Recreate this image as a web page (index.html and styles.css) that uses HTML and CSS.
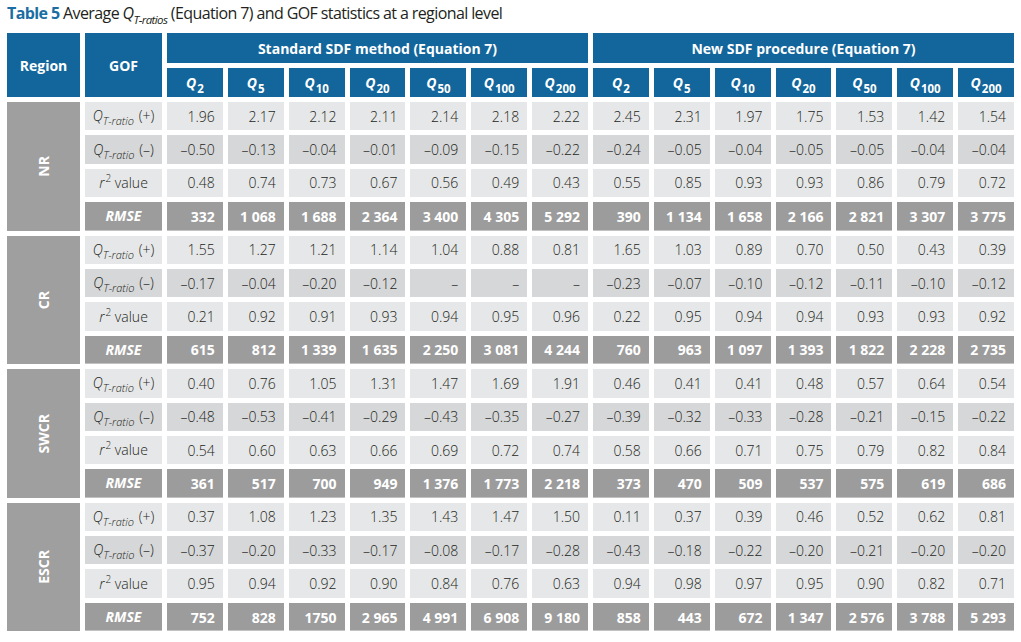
FILE: index.html
```html
<!DOCTYPE html>
<html lang="en">
<head>
<meta charset="utf-8">
<title>Table 5</title>
<link rel="stylesheet" href="styles.css">
</head>
<body>
<div class="title"><b class="tnum">Table 5</b> Average <i>Q</i><sub class="tsub">T-ratios</sub> (Equation 7) and GOF statistics at a regional level</div>
<div class="grid">
  <div class="h span2">Region</div>
  <div class="h span2">GOF</div>
  <div class="h grp">Standard SDF method (Equation 7)</div>
  <div class="h grp">New SDF procedure (Equation 7)</div>
  <div class="h q"><span><i>Q</i><sub>2</sub></span></div>
  <div class="h q"><span><i>Q</i><sub>5</sub></span></div>
  <div class="h q"><span><i>Q</i><sub>10</sub></span></div>
  <div class="h q"><span><i>Q</i><sub>20</sub></span></div>
  <div class="h q"><span><i>Q</i><sub>50</sub></span></div>
  <div class="h q"><span><i>Q</i><sub>100</sub></span></div>
  <div class="h q"><span><i>Q</i><sub>200</sub></span></div>
  <div class="h q"><span><i>Q</i><sub>2</sub></span></div>
  <div class="h q"><span><i>Q</i><sub>5</sub></span></div>
  <div class="h q"><span><i>Q</i><sub>10</sub></span></div>
  <div class="h q"><span><i>Q</i><sub>20</sub></span></div>
  <div class="h q"><span><i>Q</i><sub>50</sub></span></div>
  <div class="h q"><span><i>Q</i><sub>100</sub></span></div>
  <div class="h q"><span><i>Q</i><sub>200</sub></span></div>

  <!-- NR -->
  <div class="reg"><span>NR</span></div>
  <div class="row lt">
    <div class="lbl"><span><i>Q</i><sub>T-ratio</sub> (+)</span></div>
    <div>1.96</div><div>2.17</div><div>2.12</div><div>2.11</div><div>2.14</div><div>2.18</div><div>2.22</div>
    <div>2.45</div><div>2.31</div><div>1.97</div><div>1.75</div><div>1.53</div><div>1.42</div><div>1.54</div>
  </div>
  <div class="row dk">
    <div class="lbl"><span><i>Q</i><sub>T-ratio</sub> (–)</span></div>
    <div>–0.50</div><div>–0.13</div><div>–0.04</div><div>–0.01</div><div>–0.09</div><div>–0.15</div><div>–0.22</div>
    <div>–0.24</div><div>–0.05</div><div>–0.04</div><div>–0.05</div><div>–0.05</div><div>–0.04</div><div>–0.04</div>
  </div>
  <div class="row lt">
    <div class="lbl"><span><i>r</i><sup>2</sup> value</span></div>
    <div>0.48</div><div>0.74</div><div>0.73</div><div>0.67</div><div>0.56</div><div>0.49</div><div>0.43</div>
    <div>0.55</div><div>0.85</div><div>0.93</div><div>0.93</div><div>0.86</div><div>0.79</div><div>0.72</div>
  </div>
  <div class="row rm">
    <div class="lbl"><span><i>RMSE</i></span></div>
    <div>332</div><div>1 068</div><div>1 688</div><div>2 364</div><div>3 400</div><div>4 305</div><div>5 292</div>
    <div>390</div><div>1 134</div><div>1 658</div><div>2 166</div><div>2 821</div><div>3 307</div><div>3 775</div>
  </div>

  <!-- CR -->
  <div class="reg"><span>CR</span></div>
  <div class="row lt">
    <div class="lbl"><span><i>Q</i><sub>T-ratio</sub> (+)</span></div>
    <div>1.55</div><div>1.27</div><div>1.21</div><div>1.14</div><div>1.04</div><div>0.88</div><div>0.81</div>
    <div>1.65</div><div>1.03</div><div>0.89</div><div>0.70</div><div>0.50</div><div>0.43</div><div>0.39</div>
  </div>
  <div class="row dk">
    <div class="lbl"><span><i>Q</i><sub>T-ratio</sub> (–)</span></div>
    <div>–0.17</div><div>–0.04</div><div>–0.20</div><div>–0.12</div><div>–</div><div>–</div><div>–</div>
    <div>–0.23</div><div>–0.07</div><div>–0.10</div><div>–0.12</div><div>–0.11</div><div>–0.10</div><div>–0.12</div>
  </div>
  <div class="row lt">
    <div class="lbl"><span><i>r</i><sup>2</sup> value</span></div>
    <div>0.21</div><div>0.92</div><div>0.91</div><div>0.93</div><div>0.94</div><div>0.95</div><div>0.96</div>
    <div>0.22</div><div>0.95</div><div>0.94</div><div>0.94</div><div>0.93</div><div>0.93</div><div>0.92</div>
  </div>
  <div class="row rm">
    <div class="lbl"><span><i>RMSE</i></span></div>
    <div>615</div><div>812</div><div>1 339</div><div>1 635</div><div>2 250</div><div>3 081</div><div>4 244</div>
    <div>760</div><div>963</div><div>1 097</div><div>1 393</div><div>1 822</div><div>2 228</div><div>2 735</div>
  </div>

  <!-- SWCR -->
  <div class="reg"><span>SWCR</span></div>
  <div class="row lt">
    <div class="lbl"><span><i>Q</i><sub>T-ratio</sub> (+)</span></div>
    <div>0.40</div><div>0.76</div><div>1.05</div><div>1.31</div><div>1.47</div><div>1.69</div><div>1.91</div>
    <div>0.46</div><div>0.41</div><div>0.41</div><div>0.48</div><div>0.57</div><div>0.64</div><div>0.54</div>
  </div>
  <div class="row dk">
    <div class="lbl"><span><i>Q</i><sub>T-ratio</sub> (–)</span></div>
    <div>–0.48</div><div>–0.53</div><div>–0.41</div><div>–0.29</div><div>–0.43</div><div>–0.35</div><div>–0.27</div>
    <div>–0.39</div><div>–0.32</div><div>–0.33</div><div>–0.28</div><div>–0.21</div><div>–0.15</div><div>–0.22</div>
  </div>
  <div class="row lt">
    <div class="lbl"><span><i>r</i><sup>2</sup> value</span></div>
    <div>0.54</div><div>0.60</div><div>0.63</div><div>0.66</div><div>0.69</div><div>0.72</div><div>0.74</div>
    <div>0.58</div><div>0.66</div><div>0.71</div><div>0.75</div><div>0.79</div><div>0.82</div><div>0.84</div>
  </div>
  <div class="row rm">
    <div class="lbl"><span><i>RMSE</i></span></div>
    <div>361</div><div>517</div><div>700</div><div>949</div><div>1 376</div><div>1 773</div><div>2 218</div>
    <div>373</div><div>470</div><div>509</div><div>537</div><div>575</div><div>619</div><div>686</div>
  </div>

  <!-- ESCR -->
  <div class="reg"><span>ESCR</span></div>
  <div class="row lt">
    <div class="lbl"><span><i>Q</i><sub>T-ratio</sub> (+)</span></div>
    <div>0.37</div><div>1.08</div><div>1.23</div><div>1.35</div><div>1.43</div><div>1.47</div><div>1.50</div>
    <div>0.11</div><div>0.37</div><div>0.39</div><div>0.46</div><div>0.52</div><div>0.62</div><div>0.81</div>
  </div>
  <div class="row dk">
    <div class="lbl"><span><i>Q</i><sub>T-ratio</sub> (–)</span></div>
    <div>–0.37</div><div>–0.20</div><div>–0.33</div><div>–0.17</div><div>–0.08</div><div>–0.17</div><div>–0.28</div>
    <div>–0.43</div><div>–0.18</div><div>–0.22</div><div>–0.20</div><div>–0.21</div><div>–0.20</div><div>–0.20</div>
  </div>
  <div class="row lt">
    <div class="lbl"><span><i>r</i><sup>2</sup> value</span></div>
    <div>0.95</div><div>0.94</div><div>0.92</div><div>0.90</div><div>0.84</div><div>0.76</div><div>0.63</div>
    <div>0.94</div><div>0.98</div><div>0.97</div><div>0.95</div><div>0.90</div><div>0.82</div><div>0.71</div>
  </div>
  <div class="row rm">
    <div class="lbl"><span><i>RMSE</i></span></div>
    <div>752</div><div>828</div><div>1750</div><div>2 965</div><div>4 991</div><div>6 908</div><div>9 180</div>
    <div>858</div><div>443</div><div>672</div><div>1 347</div><div>2 576</div><div>3 788</div><div>5 293</div>
  </div>
</div>
</body>
</html>
```
FILE: styles.css
```css
html, body {
  margin: 0;
  padding: 0;
  background: #ffffff;
}
body {
  font-family: "Open Sans", "Noto Sans", sans-serif;
  color: #231f20;
  padding: 0 6px 0 7px;
}
.title {
  height: 33px;
  box-sizing: border-box;
  padding-top: 3px;
  font-size: 16px;
  line-height: 20px;
  letter-spacing: -0.6px;
  white-space: nowrap;
}
.tnum {
  color: #1a6ea3;
  font-weight: 700;
}
.title i {
  font-style: italic;
}
.tsub {
  font-size: 11.5px;
  font-style: italic;
  vertical-align: -5px;
  line-height: 0;
}
.grid {
  display: grid;
  width: 1007px;
  grid-template-columns: 73px 77px repeat(14, 1fr);
  grid-template-rows: 30px 29px repeat(16, 28.4px);
  gap: 5px;
}
.row {
  display: contents;
}
.h {
  background: #13669b;
  color: #ffffff;
  font-weight: 700;
  font-size: 14px;
  display: flex;
  align-items: center;
  justify-content: center;
}
.span2 {
  grid-row: span 2;
}
.grp {
  grid-column: span 7;
}
.q span {
  line-height: 20px;
}
.q i {
  font-style: italic;
}
.q sub {
  font-size: 11.5px;
  vertical-align: -5px;
  line-height: 0;
  margin-left: 1px;
}
.reg {
  grid-row: span 4;
  background: #a09f9f;
  color: #ffffff;
  font-weight: 700;
  font-size: 14px;
  display: flex;
  align-items: center;
  justify-content: center;
}
.reg span {
  writing-mode: vertical-rl;
  transform: rotate(180deg);
}
.row > div {
  display: flex;
  align-items: center;
  justify-content: flex-end;
  padding-right: 8px;
  font-size: 14px;
  font-weight: 300;
  color: #231f20;
  white-space: nowrap;
}
.row > .lbl {
  justify-content: center;
  padding-right: 0;
}
.lbl span {
  line-height: 20px;
}
.lbl sub {
  font-size: 11px;
  font-style: italic;
  vertical-align: -4px;
  line-height: 0;
  margin-right: 1px;
}
.lbl sup {
  font-size: 10px;
  vertical-align: 6px;
  line-height: 0;
  margin-left: 1px;
}
.lt > div {
  background: #e6e7e8;
}
.dk > div {
  background: #d6d7d8;
}
.rm > div {
  background: #9c9c9c;
  color: #ffffff;
  font-weight: 700;
  box-shadow: inset 0 -1px 0 #c2c2c2;
}
.rm > .lbl i {
  font-weight: 700;
}
```
